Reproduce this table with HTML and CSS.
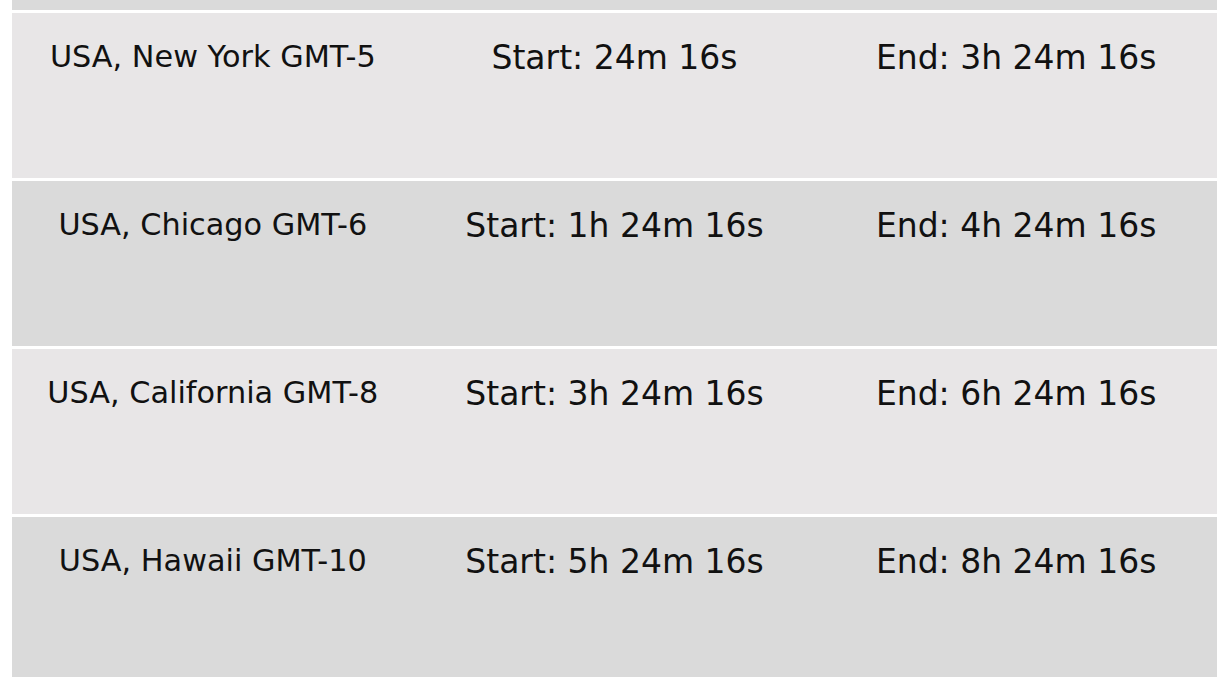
FILE: index.html
```html
<!DOCTYPE html>
<html lang="en">
<head>
<meta charset="utf-8">
<title>Time zones</title>
<link rel="stylesheet" href="styles.css">
</head>
<body>
<div class="table">
  <div class="row row-dark row-cut"></div>
  <div class="row row-light">
    <div class="cell zone">USA, New York GMT-5</div>
    <div class="cell time">Start: 24m 16s</div>
    <div class="cell time">End: 3h 24m 16s</div>
  </div>
  <div class="row row-dark">
    <div class="cell zone">USA, Chicago GMT-6</div>
    <div class="cell time">Start: 1h 24m 16s</div>
    <div class="cell time">End: 4h 24m 16s</div>
  </div>
  <div class="row row-light">
    <div class="cell zone">USA, California GMT-8</div>
    <div class="cell time">Start: 3h 24m 16s</div>
    <div class="cell time">End: 6h 24m 16s</div>
  </div>
  <div class="row row-dark">
    <div class="cell zone">USA, Hawaii GMT-10</div>
    <div class="cell time">Start: 5h 24m 16s</div>
    <div class="cell time">End: 8h 24m 16s</div>
  </div>
</div>
</body>
</html>
```
FILE: styles.css
```css
html, body {
  margin: 0;
  padding: 0;
  background: #ffffff;
}
body {
  font-family: "DejaVu Sans", "Liberation Sans", sans-serif;
  color: #111111;
  overflow: hidden;
}
.table {
  display: flex;
  flex-direction: column;
  gap: 3px;
  padding: 0 4px 0 12px;
}
.row {
  display: grid;
  grid-template-columns: 1fr 1fr 1fr;
  align-items: start;
  height: 165px;
}
.row-cut {
  height: 10px;
}
.row-light {
  background: #e8e6e7;
}
.row-dark {
  background: #dadada;
}
.cell {
  text-align: center;
  white-space: nowrap;
  line-height: 40px;
}
.zone {
  font-size: 30.3px;
  padding-top: 24px;
}
.time {
  font-size: 33px;
  padding-top: 25px;
}
```
